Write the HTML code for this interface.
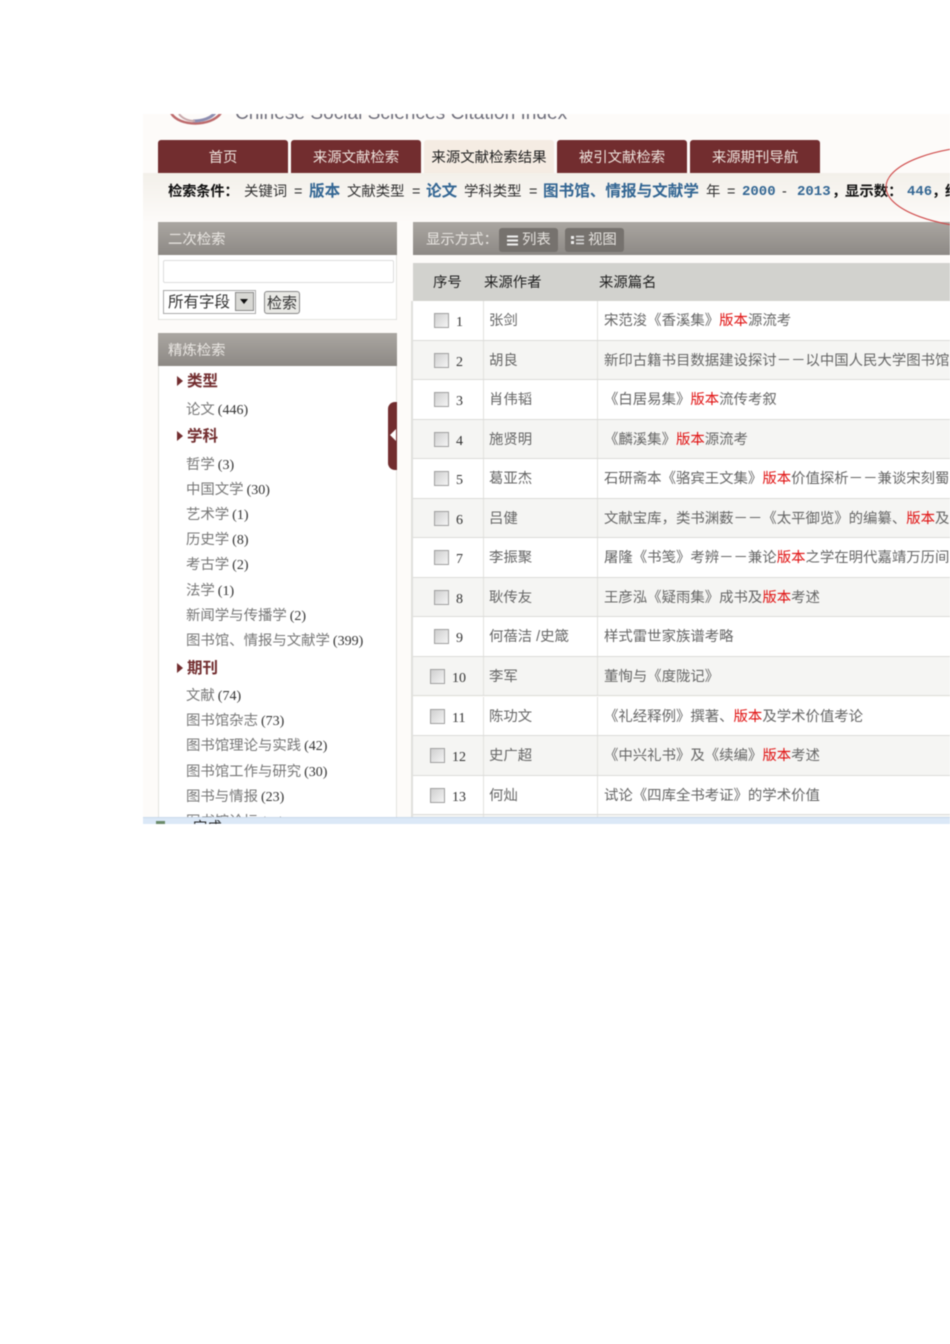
<!DOCTYPE html>
<html lang="zh">
<head>
<meta charset="utf-8">
<title>来源文献检索结果</title>
<style>
html,body{margin:0;padding:0;background:#fff}
body{width:950px;height:1344px;position:relative;overflow:hidden;font-family:"Liberation Sans","Noto Sans CJK SC",sans-serif}
#shot{position:absolute;left:143px;top:114px;width:807px;height:710px;overflow:hidden;background:#fdfbf9;filter:blur(.4px)}
#in{position:absolute;left:-143px;top:-114px;width:950px;height:1344px}
.a{position:absolute;white-space:nowrap}
.tab{position:absolute;top:140px;width:130px;height:33px;background:#722d2f;border-radius:3px 3px 0 0;color:#eee3dd;font-size:14.4px;line-height:37px;text-align:center}
.tab.on{background:#f5ece3;color:#222}
.hd{position:absolute;background:linear-gradient(#aaa6a1,#8d8985);color:#e9e6e2;font-size:14.4px}
.c{position:absolute;top:184px;font-size:14.4px;line-height:16px;color:#333;white-space:nowrap}
.b{color:#336693;font-weight:700;font-size:15.6px}
.m{font-family:"Liberation Mono",monospace;font-size:14px;font-weight:700}
.k{color:#111;font-weight:700}
.s{position:absolute;left:186px;font-size:14.4px;line-height:18px;color:#777;white-space:nowrap;margin-top:1px}
.s i{font-style:normal;font-size:14px;color:#333;font-family:"Liberation Serif","Noto Sans CJK SC",serif;margin-left:-1px}
.t{position:absolute;left:177px;font-size:15.5px;line-height:18px;font-weight:700;color:#722d2f;white-space:nowrap;margin-top:1px}
.t:before{content:"";display:inline-block;border-left:6px solid #722d2f;border-top:5px solid transparent;border-bottom:5px solid transparent;margin:0 4px 0 0;vertical-align:0}
.r{position:absolute;left:413px;width:537px;height:38.5px;border-bottom:1.05px solid #dcdcd8;background:#fff;overflow:hidden}
.r.e{background:#f5f5f3}
.r u{position:absolute;top:0;bottom:0;width:1.3px;background:#e2e2de}
.cb{position:absolute;left:21px;top:12px;width:13px;height:13px;border:1px solid #a0a0a0;background:linear-gradient(135deg,#cfcfcf,#f4f4f4)}
.n{position:absolute;left:43px;top:14px;font:14px/16px "Liberation Serif",serif;color:#333}
.au{position:absolute;left:76px;top:11px;font-size:14.4px;line-height:18px;color:#666;white-space:nowrap}
.ti{position:absolute;left:191px;top:11px;font-size:14.4px;line-height:18px;color:#666;white-space:nowrap}
.ti b{font-weight:400;color:#e01010}
.w .cb{left:17px}.w .n{left:39px}
</style>
</head>
<body>
<div id="shot"><div id="in">

<svg class="a" style="left:165px;top:100px" width="65" height="30" viewBox="0 0 65 30"><path d="M6 13C14 27 46 27 56 13" fill="none" stroke="#bd6a6c" stroke-width="2.5"/><path d="M28 21C38 21 46 18 50 13" fill="none" stroke="#8d8db0" stroke-width="3"/><path d="M14 14C18 19 24 21 30 21" fill="none" stroke="#c9a9ac" stroke-width="2"/></svg>
<div class="a" style="left:235px;top:102px;font-size:19.1px;line-height:24px;color:#6f6f7c">Chinese Social Sciences Citation Index</div>

<div class="tab" style="left:158px">首页</div>
<div class="tab" style="left:291px">来源文献检索</div>
<div class="tab on" style="left:424px">来源文献检索结果</div>
<div class="tab" style="left:557px">被引文献检索</div>
<div class="tab" style="left:690px">来源期刊导航</div>

<div class="a" style="left:143px;top:173px;width:807px;height:49px;background:linear-gradient(#f3f0ea,#fdfbf9)"></div>
<div class="c k" style="left:168px;letter-spacing:-.3px">检索条件&#xFF1A;</div>
<div class="c" style="left:244px">关键词</div><div class="c" style="left:294px">=</div>
<div class="c b" style="left:309px">版本</div>
<div class="c" style="left:347px">文献类型</div><div class="c" style="left:412px">=</div>
<div class="c b" style="left:426px">论文</div>
<div class="c" style="left:464px">学科类型</div><div class="c" style="left:529px">=</div>
<div class="c b" style="left:543px">图书馆、情报与文献学</div>
<div class="c" style="left:706px">年</div><div class="c" style="left:727px">=</div>
<div class="c b m" style="left:742px">2000</div><div class="c" style="left:782px">-</div>
<div class="c b m" style="left:797px">2013</div><div class="c k" style="left:832px">&#xFF0C;</div>
<div class="c k" style="left:845px">显示数&#xFF1A;</div>
<div class="c b m" style="left:907px">446</div><div class="c k" style="left:932px">&#xFF0C;</div><div class="c k" style="left:945px">结</div>

<!-- left panel -->
<div class="hd" style="left:158px;top:222px;width:239px;height:33px;line-height:36px;text-indent:10px">二次检索</div>
<div class="a" style="left:158px;top:255px;width:237px;height:64px;background:#fff;border:1px solid #e2e2df;border-top:0"></div>
<div class="a" style="left:163px;top:260px;width:229px;height:21px;background:#fff;border:1px solid #ddd;border-radius:2px"></div>
<div class="a" style="left:163px;top:290px;width:91px;height:22px;border:1px solid #aaa;background:#fff;font-size:15.5px;line-height:24px;color:#333;text-indent:4px">所有字段</div>
<div class="a" style="left:235px;top:292px;width:19px;height:19px;background:#d8d8d4;border:1px solid #888;box-sizing:border-box"></div>
<div class="a" style="left:240px;top:299px;border-top:5px solid #111;border-left:4px solid transparent;border-right:4px solid transparent"></div>
<div class="a" style="left:264px;top:291px;width:34px;height:21px;border:1px solid #888;border-radius:3px;background:#e9e9e5;font-size:15px;line-height:23px;text-align:center;color:#333">检索</div>

<div class="hd" style="left:158px;top:333px;width:239px;height:33px;line-height:36px;text-indent:10px">精炼检索</div>
<div class="a" style="left:158px;top:366px;width:237px;height:460px;background:#fff;border:1px solid #e2e2df;border-width:0 1px"></div>

<div class="t" style="top:372px">类型</div>
<div class="s" style="top:400px">论文 <i>(446)</i></div>
<div class="t" style="top:427px">学科</div>
<div class="s" style="top:455px">哲学 <i>(3)</i></div>
<div class="s" style="top:480px">中国文学 <i>(30)</i></div>
<div class="s" style="top:505px">艺术学 <i>(1)</i></div>
<div class="s" style="top:530px">历史学 <i>(8)</i></div>
<div class="s" style="top:555px">考古学 <i>(2)</i></div>
<div class="s" style="top:581px">法学 <i>(1)</i></div>
<div class="s" style="top:606px">新闻学与传播学 <i>(2)</i></div>
<div class="s" style="top:631px">图书馆、情报与文献学 <i>(399)</i></div>
<div class="t" style="top:659px">期刊</div>
<div class="s" style="top:686px">文献 <i>(74)</i></div>
<div class="s" style="top:711px">图书馆杂志 <i>(73)</i></div>
<div class="s" style="top:736px">图书馆理论与实践 <i>(42)</i></div>
<div class="s" style="top:762px">图书馆工作与研究 <i>(30)</i></div>
<div class="s" style="top:787px">图书与情报 <i>(23)</i></div>
<div class="s" style="top:812px">图书馆论坛 <i>(20)</i></div>

<div class="a" style="left:388px;top:402px;width:9px;height:68px;background:#722d2f;border-radius:7px 0 0 7px"></div>
<div class="a" style="left:390px;top:429px;border-right:6px solid #fff;border-top:6px solid transparent;border-bottom:6px solid transparent"></div>

<!-- right panel -->
<div class="hd" style="left:413px;top:222px;width:537px;height:33px;line-height:36px;text-indent:13px">显示方式&#xFF1A;</div>
<div class="a" style="left:499px;top:228px;width:59px;height:24px;border-radius:3px;background:#76726e;color:#e6e3df;font-size:14.4px;line-height:25px;text-indent:23px">列表</div>
<svg class="a" style="left:506px;top:235px" width="13" height="11" viewBox="0 0 13 11"><path d="M1 1.5H12M1 5.5H12M1 9.5H12" stroke="#eee" stroke-width="2"/></svg>
<div class="a" style="left:565px;top:228px;width:59px;height:24px;border-radius:3px;background:#76726e;color:#e6e3df;font-size:14.4px;line-height:25px;text-indent:23px">视图</div>
<svg class="a" style="left:570px;top:235px" width="15" height="11" viewBox="0 0 15 11"><path d="M1 1H4V4H1ZM1 6H4V9H1Z" fill="#eee"/><path d="M6 1.5H14M6 5H14M6 8.5H14" stroke="#ddd" stroke-width="1.5"/></svg>

<div class="a" style="left:413px;top:263px;width:537px;height:38px;background:#d2d2ce"></div>
<div class="a" style="left:433px;top:274px;font-size:14.4px;line-height:18px;color:#222">序号</div>
<div class="a" style="left:484px;top:274px;font-size:14.4px;line-height:18px;color:#222">来源作者</div>
<div class="a" style="left:599px;top:274px;font-size:14.4px;line-height:18px;color:#222">来源篇名</div>
<div class="a" style="left:411px;top:301px;width:2px;height:520px;background:#e0e0dd"></div>

<div class="r" style="top:301px"><u style="left:70px"></u><u style="left:184px"></u><span class="cb"></span><span class="n">1</span><span class="au">张剑</span><span class="ti">宋范浚《香溪集》<b>版本</b>源流考</span></div>
<div class="r e" style="top:340.55px"><u style="left:70px"></u><u style="left:184px"></u><span class="cb"></span><span class="n">2</span><span class="au">胡良</span><span class="ti">新印古籍书目数据建设探讨&#xFF0D;&#xFF0D;以中国人民大学图书馆</span></div>
<div class="r" style="top:380.1px"><u style="left:70px"></u><u style="left:184px"></u><span class="cb"></span><span class="n">3</span><span class="au">肖伟韬</span><span class="ti">《白居易集》<b>版本</b>流传考叙</span></div>
<div class="r e" style="top:419.65px"><u style="left:70px"></u><u style="left:184px"></u><span class="cb"></span><span class="n">4</span><span class="au">施贤明</span><span class="ti">《麟溪集》<b>版本</b>源流考</span></div>
<div class="r" style="top:459.2px"><u style="left:70px"></u><u style="left:184px"></u><span class="cb"></span><span class="n">5</span><span class="au">葛亚杰</span><span class="ti">石研斋本《骆宾王文集》<b>版本</b>价值探析&#xFF0D;&#xFF0D;兼谈宋刻蜀</span></div>
<div class="r e" style="top:498.75px"><u style="left:70px"></u><u style="left:184px"></u><span class="cb"></span><span class="n">6</span><span class="au">吕健</span><span class="ti">文献宝库&#xFF0C;类书渊薮&#xFF0D;&#xFF0D;《太平御览》的编纂、<b>版本</b>及</span></div>
<div class="r" style="top:538.3px"><u style="left:70px"></u><u style="left:184px"></u><span class="cb"></span><span class="n">7</span><span class="au">李振聚</span><span class="ti">屠隆《书笺》考辨&#xFF0D;&#xFF0D;兼论<b>版本</b>之学在明代嘉靖万历间</span></div>
<div class="r e" style="top:577.85px"><u style="left:70px"></u><u style="left:184px"></u><span class="cb"></span><span class="n">8</span><span class="au">耿传友</span><span class="ti">王彦泓《疑雨集》成书及<b>版本</b>考述</span></div>
<div class="r" style="top:617.4px"><u style="left:70px"></u><u style="left:184px"></u><span class="cb"></span><span class="n">9</span><span class="au">何蓓洁 /史箴</span><span class="ti">样式雷世家族谱考略</span></div>
<div class="r e w" style="top:656.95px"><u style="left:70px"></u><u style="left:184px"></u><span class="cb"></span><span class="n">10</span><span class="au">李军</span><span class="ti">董恂与《度陇记》</span></div>
<div class="r w" style="top:696.5px"><u style="left:70px"></u><u style="left:184px"></u><span class="cb"></span><span class="n">11</span><span class="au">陈功文</span><span class="ti">《礼经释例》撰著、<b>版本</b>及学术价值考论</span></div>
<div class="r e w" style="top:736.05px"><u style="left:70px"></u><u style="left:184px"></u><span class="cb"></span><span class="n">12</span><span class="au">史广超</span><span class="ti">《中兴礼书》及《续编》<b>版本</b>考述</span></div>
<div class="r w" style="top:775.6px"><u style="left:70px"></u><u style="left:184px"></u><span class="cb"></span><span class="n">13</span><span class="au">何灿</span><span class="ti">试论《四库全书考证》的学术价值</span></div>
<div class="r e" style="top:815.15px"><u style="left:70px"></u><u style="left:184px"></u></div>

<svg class="a" style="left:870px;top:140px" width="80" height="95" viewBox="0 0 80 95"><ellipse cx="131" cy="47" rx="115" ry="42" fill="none" stroke="#cf4a4a" stroke-width="1.1"/></svg>

<div class="a" style="left:143px;top:817px;width:807px;height:7px;background:#dbe8f7;border-top:1px solid #c9d9ec;box-sizing:border-box;overflow:hidden">
<span class="a" style="left:50px;top:1px;font-size:14.4px;line-height:18px;color:#222">完成</span>
<span class="a" style="left:13px;top:3px;width:9px;height:3px;background:#6a8a6a"></span>
</div>

</div></div>
</body>
</html>
